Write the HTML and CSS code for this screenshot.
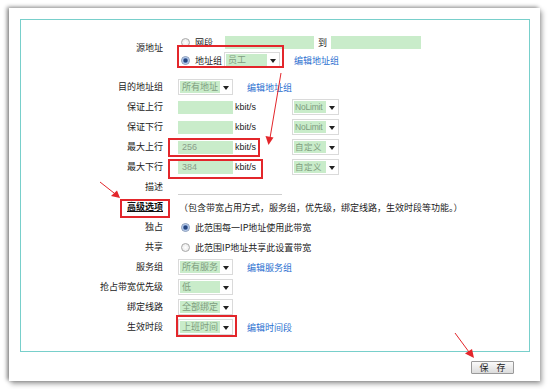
FILE: index.html
```html
<!DOCTYPE html>
<html lang="zh-CN">
<head>
  <meta charset="UTF-8">
  <title>带宽管理 - 新增规则</title>
  <link rel="stylesheet" href="styles.css">
</head>
<body>

  <!-- PANEL: the white sheet with the rule form -->
  <div class="panel">
    <div class="box">

      <!-- source address: two choices -->
      <div class="row row-source">
        <div class="label label-source">源地址</div>
        <div class="lines">
          <div class="line">
            <span class="radio"></span><span class="opt">网段</span>
            <span class="input w-seg"></span>
            <span class="to">到</span>
            <span class="input w-seg2"></span>
          </div>
          <div class="line">
            <span class="radio checked"></span><span class="opt">地址组</span>
            <span class="select w-src"><span class="sel-val">员工</span><span class="caret"></span></span>
            <a class="link link-src">编辑地址组</a>
          </div>
        </div>
      </div>

      <div class="row row-dest">
        <div class="label">目的地址组</div>
        <div class="ctrl">
          <span class="select w-55"><span class="sel-val">所有地址</span><span class="caret"></span></span>
          <a class="link">编辑地址组</a>
        </div>
      </div>

      <div class="row">
        <div class="label">保证上行</div>
        <div class="ctrl">
          <span class="input w-rate"></span><span class="unit">kbit/s</span>
          <span class="select w-lim"><span class="sel-val">NoLimit</span><span class="caret"></span></span>
        </div>
      </div>

      <div class="row">
        <div class="label">保证下行</div>
        <div class="ctrl">
          <span class="input w-rate"></span><span class="unit">kbit/s</span>
          <span class="select w-lim"><span class="sel-val">NoLimit</span><span class="caret"></span></span>
        </div>
      </div>

      <div class="row">
        <div class="label">最大上行</div>
        <div class="ctrl">
          <span class="input w-rate">256</span><span class="unit">kbit/s</span>
          <span class="select w-lim"><span class="sel-val">自定义</span><span class="caret"></span></span>
        </div>
      </div>

      <div class="row">
        <div class="label">最大下行</div>
        <div class="ctrl">
          <span class="input w-rate">384</span><span class="unit">kbit/s</span>
          <span class="select w-lim"><span class="sel-val">自定义</span><span class="caret"></span></span>
        </div>
      </div>

      <div class="row">
        <div class="label">描述</div>
        <div class="ctrl"><span class="desc"></span></div>
      </div>

      <div class="row">
        <div class="label"><a class="adv">高级选项</a></div>
        <div class="ctrl note">（包含带宽占用方式，服务组，优先级，绑定线路，生效时段等功能。）</div>
      </div>

      <div class="row">
        <div class="label">独占</div>
        <div class="ctrl"><span class="radio checked"></span><span class="opt">此范围每一IP地址使用此带宽</span></div>
      </div>

      <div class="row">
        <div class="label">共享</div>
        <div class="ctrl"><span class="radio"></span><span class="opt">此范围IP地址共享此设置带宽</span></div>
      </div>

      <div class="row">
        <div class="label">服务组</div>
        <div class="ctrl">
          <span class="select w-55"><span class="sel-val">所有服务</span><span class="caret"></span></span>
          <a class="link">编辑服务组</a>
        </div>
      </div>

      <div class="row">
        <div class="label">抢占带宽优先级</div>
        <div class="ctrl">
          <span class="select w-55"><span class="sel-val">低</span><span class="caret"></span></span>
        </div>
      </div>

      <div class="row">
        <div class="label">绑定线路</div>
        <div class="ctrl">
          <span class="select w-55"><span class="sel-val">全部绑定</span><span class="caret"></span></span>
        </div>
      </div>

      <div class="row">
        <div class="label">生效时段</div>
        <div class="ctrl">
          <span class="select w-55"><span class="sel-val">上班时间</span><span class="caret"></span></span>
          <a class="link">编辑时间段</a>
        </div>
      </div>

    </div>

    <div class="actions">
      <button class="btn">保 存</button>
    </div>
  </div>

  <!-- MARKS: red boxes and arrows drawn over the screenshot -->
  <svg class="marks" width="550" height="389" viewBox="0 0 550 389">
    <g fill="none" stroke="#e3262b" stroke-width="2">
      <rect x="178" y="46" width="105" height="21"/>
      <rect x="169" y="139" width="90" height="17"/>
      <rect x="169" y="160" width="93" height="18"/>
      <rect x="121" y="200" width="48" height="17"/>
      <rect x="177" y="316" width="59" height="20"/>
    </g>
    <g stroke="#e3262b" stroke-width="1">
      <line x1="281" y1="73" x2="270" y2="138"/>
      <line x1="100" y1="182" x2="114" y2="193"/>
      <line x1="455" y1="333" x2="469" y2="352"/>
    </g>
    <g fill="#e3262b">
      <polygon points="265.5,136 273.5,137.5 268.5,145"/>
      <polygon points="111,196 117,190.5 120,198"/>
      <polygon points="465,353.5 472,349 474,358"/>
    </g>
  </svg>

</body>
</html>
```

FILE: styles.css
```css
/* BODY: white page, the panel sits on it with a soft shadow */
body {
  margin: 0;
  width: 550px;
  height: 389px;
  background: #fff;
  font-family: "Noto Sans CJK SC", "Liberation Sans", sans-serif;
  font-size: 9px;
  color: #222;
  position: relative;
  overflow: hidden;
}

/* PANEL: the white sheet */
.panel {
  position: absolute;
  left: 9px;
  top: 8px;
  width: 531px;
  height: 373px;
  box-sizing: border-box;
  padding: 11px 10px 0 11px;
  background: #fff;
  box-shadow: -2px -1px 4px rgba(0, 0, 0, 0.45), 2px 3px 5px rgba(0, 0, 0, 0.35);
}

/* BOX: teal frame round the form */
.box {
  border: 1px solid #78cfcb;
  padding: 13px 0 14px 0;
}

.row {
  display: grid;
  grid-template-columns: 142px 1fr;
  column-gap: 15px;
  height: 20px;
  align-items: center;
}

.row-source {
  height: 36px;
  align-items: stretch;
}

.row-dest {
  margin-top: 8px;
}

.label {
  text-align: right;
  white-space: nowrap;
  line-height: 12px;
}

.label-source {
  align-self: start;
  padding-top: 9px;
}

.lines {
  display: flex;
  flex-direction: column;
}

.line {
  height: 18px;
  display: flex;
  align-items: center;
  white-space: nowrap;
}

.ctrl {
  display: flex;
  align-items: center;
  white-space: nowrap;
}

/* RADIO: small round button */
.radio {
  width: 7px;
  height: 7px;
  margin-left: 3px;
  border: 1px solid #a8a8a8;
  border-radius: 50%;
  background: radial-gradient(circle, #fff 0, #e4e4e4 100%);
  flex: none;
}

.radio.checked {
  border-color: #8096b8;
  background: radial-gradient(circle, #26457e 0, #26457e 1.5px, #8eaee0 2.6px, #e8eefa 3.5px);
}

.opt {
  margin-left: 5px;
}

/* INPUT: green text box */
.input {
  display: inline-block;
  height: 13px;
  line-height: 13px;
  background: #c9ecca;
  color: #8a9c8a;
  font-family: "Liberation Sans", sans-serif;
  font-size: 9px;
  padding-left: 4px;
  box-sizing: border-box;
  flex: none;
}

.w-seg { width: 89px; margin-left: 12px; }
.w-seg2 { width: 90px; }
.w-rate { width: 55px; }

.to {
  width: 17px;
  text-align: center;
}

.unit {
  width: 57px;
  padding-left: 2px;
  font-family: "Liberation Sans", sans-serif;
  font-size: 9px;
}

/* SELECT: green value with white drop arrow */
.select {
  display: inline-flex;
  height: 16px;
  box-sizing: border-box;
  border: 1px solid #dadada;
  background: #fff;
  padding: 1px;
  flex: none;
}

.sel-val {
  flex: 1;
  background: #c9ecca;
  color: #7f9d7f;
  padding-left: 2px;
  line-height: 12px;
  overflow: hidden;
  white-space: nowrap;
}

.caret {
  width: 11px;
  position: relative;
  flex: none;
}

.caret::after {
  content: "";
  position: absolute;
  left: 3px;
  top: 5px;
  border-left: 3px solid transparent;
  border-right: 3px solid transparent;
  border-top: 4px solid #222;
}

.w-src { width: 56px; margin-left: 2px; }
.w-55 { width: 55px; }
.w-lim { width: 47px; }
.w-lim .sel-val {
  font-family: "Liberation Sans", sans-serif;
  font-size: 8.5px;
  letter-spacing: -0.2px;
  padding-left: 1px;
}

.link {
  color: #2a6fd0;
  margin-left: 14px;
  text-decoration: none;
}

.desc {
  width: 104px;
  height: 1px;
  margin-top: 14px;
  background: #cfcfcf;
}

.adv {
  font-weight: bold;
  text-decoration: underline;
  color: #111;
}

.note {
  margin-left: 1px;
}

/* ACTIONS: save button under the frame */
.actions {
  display: flex;
  justify-content: flex-end;
  padding: 9px 16px 0 0;
}

.btn {
  width: 43px;
  height: 13px;
  padding: 0;
  border: 1px solid #9a9a9a;
  border-radius: 1px;
  background: linear-gradient(#fafafa, #dcdcdc);
  font-family: "Noto Sans CJK SC", sans-serif;
  font-size: 9px;
  line-height: 11px;
  letter-spacing: 3px;
  text-indent: 3px;
  color: #222;
}

/* MARKS: annotation layer over everything */
.marks {
  position: absolute;
  left: 0;
  top: 0;
  pointer-events: none;
}
```
